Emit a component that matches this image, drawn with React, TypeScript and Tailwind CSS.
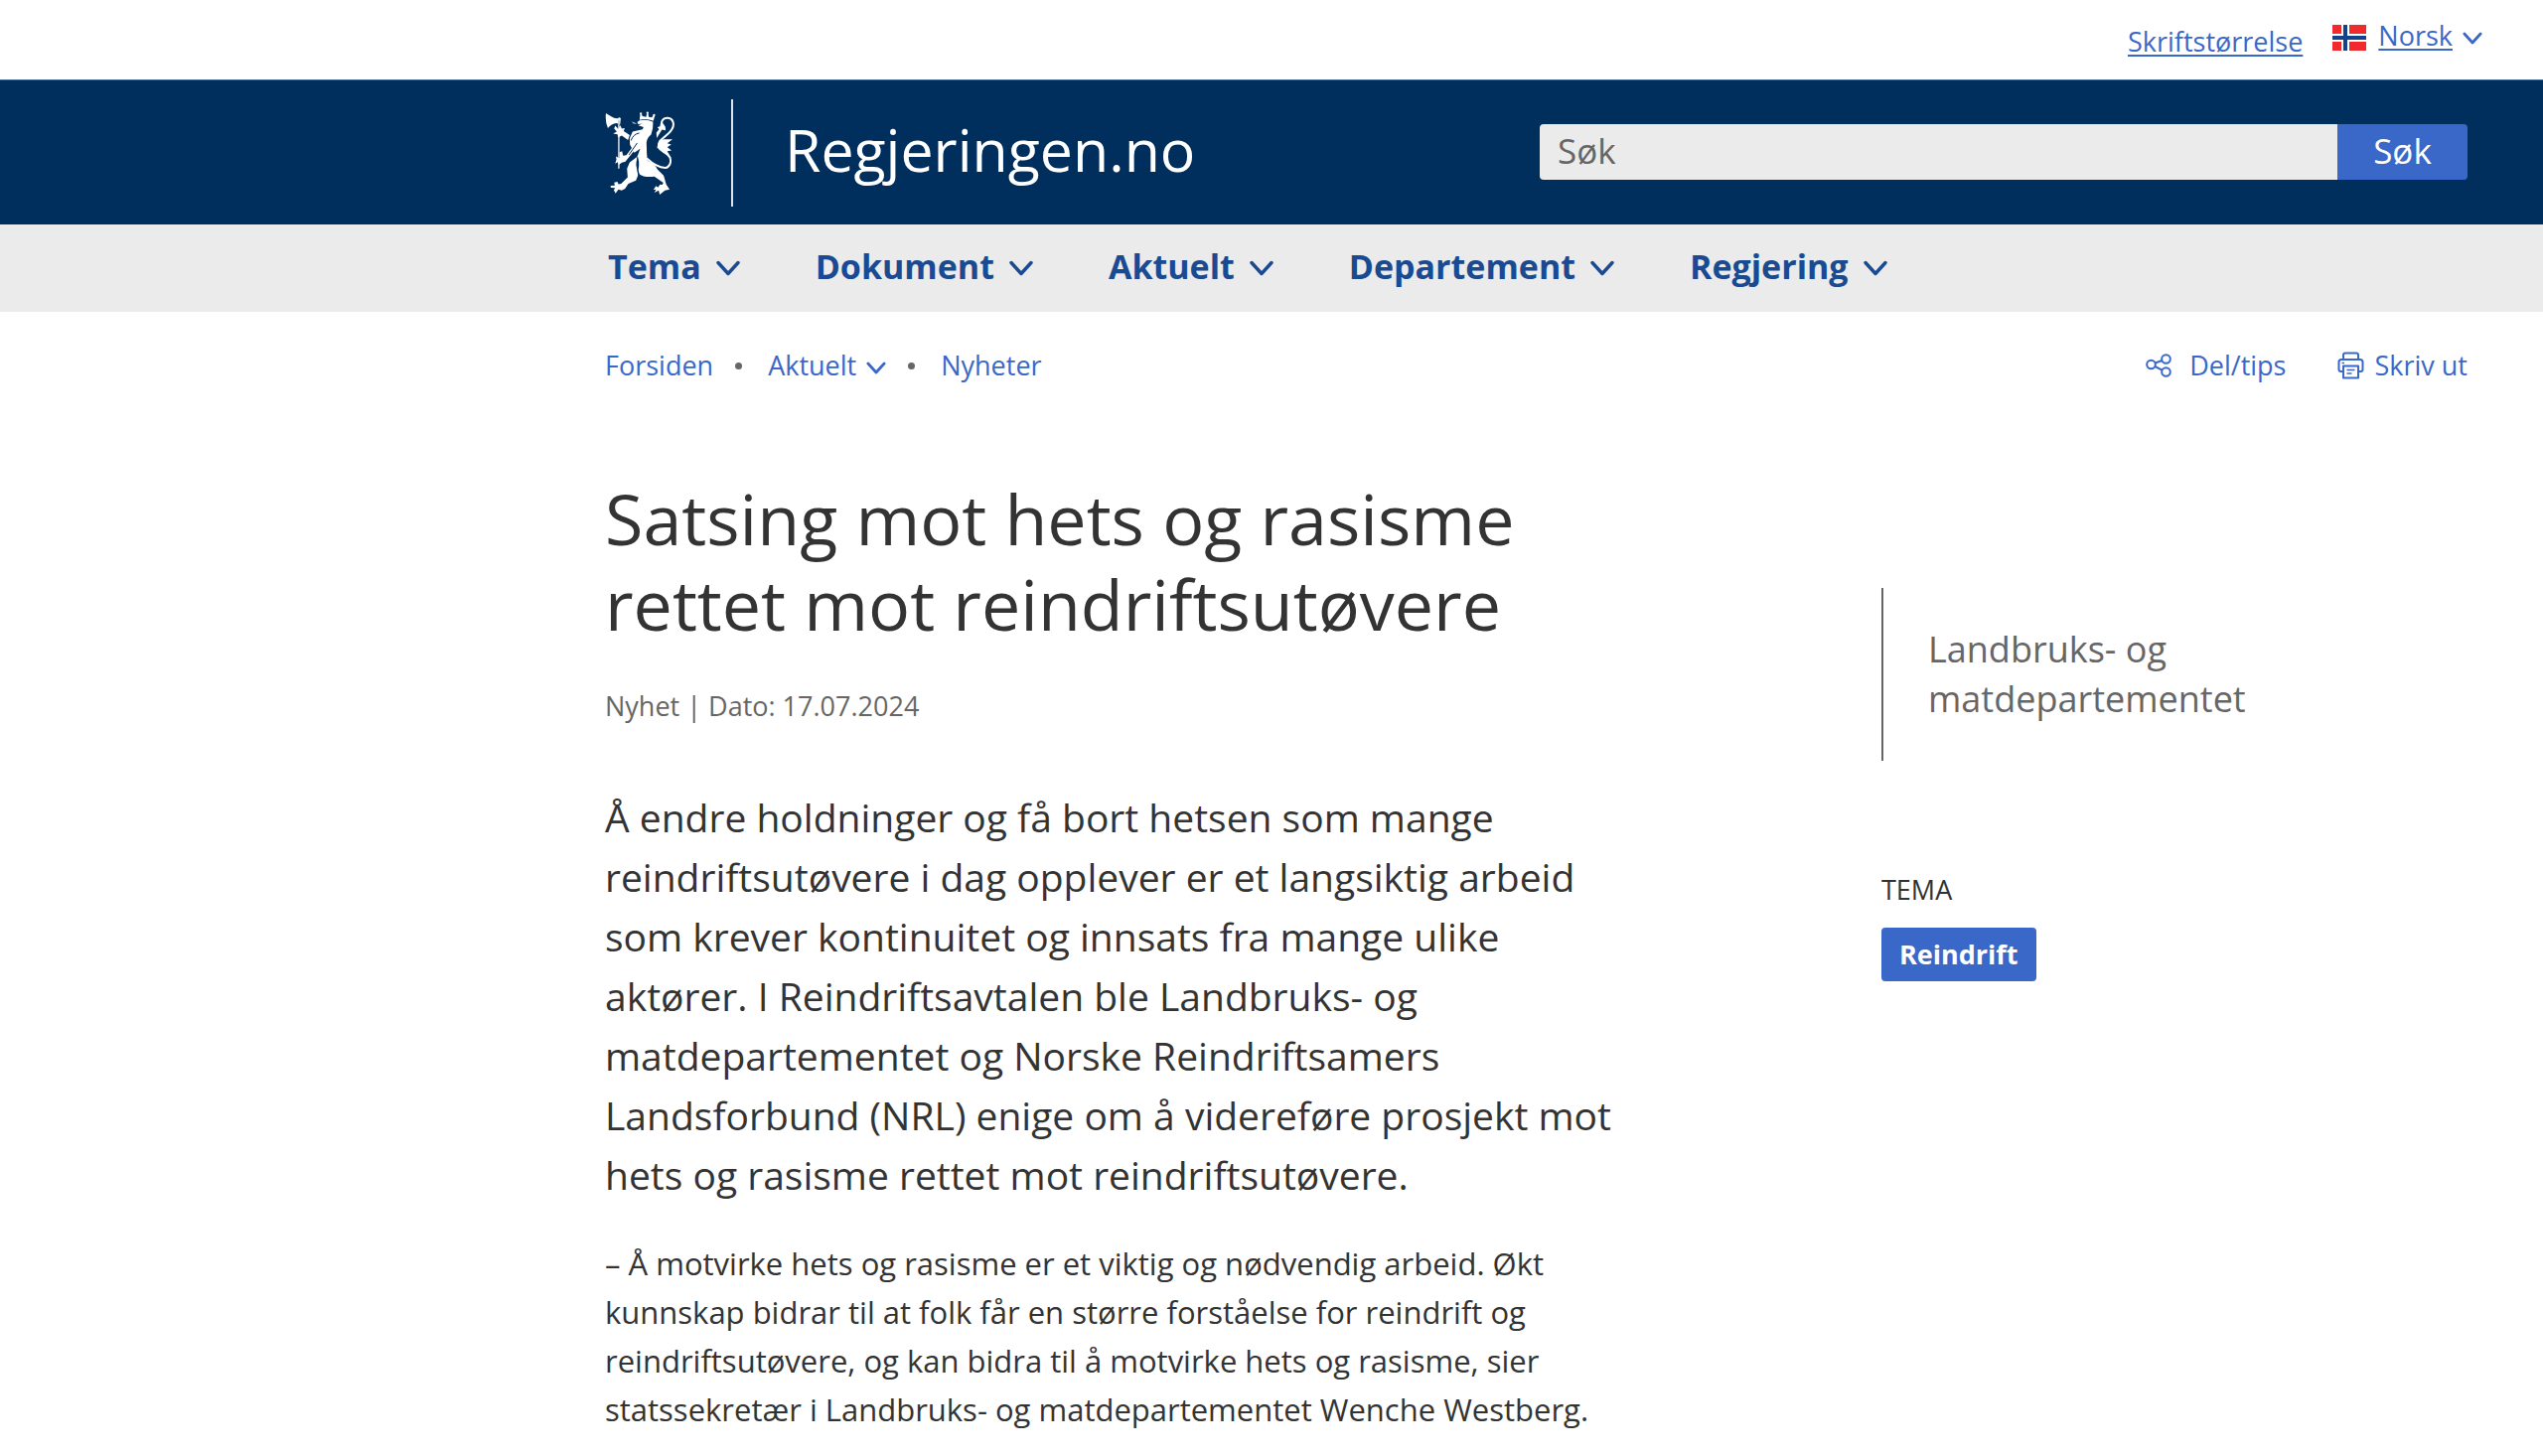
import React from 'react';

const menuItems = ['Tema', 'Dokument', 'Aktuelt', 'Departement', 'Regjering'];

interface ChevronProps {
  className: string;
}

const Chevron: React.FC<ChevronProps> = ({ className }) => (
  <svg viewBox="0 0 24 16" className={className} fill="none" stroke="currentColor" strokeWidth="3.4" strokeLinecap="round" strokeLinejoin="round" aria-hidden="true">
    <path d="M2 2.5 12 13.5 22 2.5" />
  </svg>
);

// Norwegian flag
const Flag = () => (
  <svg viewBox="0 0 34 26" className="mt-1 h-[26px] w-[34px]" aria-hidden="true">
    <rect width="34" height="26" fill="#ef2b2d" />
    <path d="M0 13H34M13 0V26" stroke="#fff" strokeWidth="8" />
    <path d="M0 13H34M13 0V26" stroke="#14438c" strokeWidth="4" />
  </svg>
);

// The lion from the coat of arms, holding the axe
const Lion = () => (
  <svg viewBox="58 66 212 256" className="mt-0.5 h-[85px] w-[71px]" fill="#fff" aria-hidden="true">
    <path d="M60 72 76 82Q86 89 96 88 101 82 105 88L103 106 92 102Q77 104 66 117 57 96 60 72Z" />
    <path d="M99 92V240" stroke="#c3cedb" strokeWidth="5" />
    {/* front paws and arms */}
    <path d="M88 110 98 120 103 108 108 119 117 117 114 126 132 138 127 153 108 140 97 146 95 136 82 134 93 128 85 119Z" />
    <path d="M153 158 163 164 119 219 108 222 99 229 96 220 88 225 92 212 90 203 101 208 101 190 109 187 112 201 122 199Z" />
    {/* crown, head and torso */}
    <circle cx="166" cy="73" r="3.5" />
    <circle cx="186" cy="71" r="3.5" />
    <circle cx="206" cy="78" r="3.5" />
    <path d="M164 75 168 74 171 81 182 83 184 73 188 73 190 83 199 85 204 78 208 80 204 95Q184 87 162 92Z" />
    <path d="M162 94Q184 89 203 98L202 118 197 137Q184 148 183 161L184 194 186 216Q211 228 216 242L235 261 243 288 253 303 239 306 223 319 220 306 207 313 212 303 204 304 212 293 218 297 224 288 231 289 234 283 207 264Q174 267 162 257L158 245Q164 217 155 204L164 180 146 192 133 168 132 148 141 128 171 121 174 114 158 109 170 104 158 105 155 99Z" />
    <path d="M138 97 148 101 154 105 143 104Z" opacity=".65" />
    {/* hind leg */}
    <path d="M156 203Q151 219 154 233L157 261 151 276 128 286 118 301 108 306 98 303 89 315 84 305 88 299 75 298 74 292 87 291 85 282 95 280 98 287 106 286 126 266 124 240 132 221Z" />
    <path d="M136 155Q142 136 161 132M155 162 130 198M156 205Q149 230 158 253" fill="none" stroke="#002e5d" strokeWidth="3" />
    {/* tail */}
    <path d="M184 209Q213 236 240 238C252 236 260 222 254 206Q247 193 234 187C216 180 216 162 230 150L250 133C262 122 267 108 263 97C258 84 238 83 231 94Q226 101 234 110" fill="none" stroke="#fff" strokeWidth="6" />
    <path d="M226 99 234 105 240 113 241 124 230 122 214 147 213 131 221 121 216 114 224 112Z" />
    <path d="M221 155 236 151 262 151 246 163 258 167 246 175 259 185 246 187 258 208 233 192 215 176Z" />
  </svg>
);

const ShareIcon = () => (
  <svg viewBox="0 0 26 24" className="h-6 w-[26px]" fill="none" stroke="currentColor" strokeWidth="2" aria-hidden="true">
    <circle cx="5.5" cy="11" r="4.3" />
    <circle cx="20.5" cy="5.5" r="4.3" />
    <circle cx="20.5" cy="18.5" r="4.3" />
    <path d="M9.6 9.5 16.4 7M9.4 13 16.6 16.6" />
  </svg>
);

const PrinterIcon = () => (
  <svg viewBox="0 0 27 28" className="h-7 w-[27px]" fill="none" stroke="currentColor" strokeWidth="2" strokeLinejoin="round" aria-hidden="true">
    <path d="M6 8V3.5Q6 1.5 8 1.5H19Q21 1.5 21 3.5V8" />
    <path d="M6 20H3.5Q1.5 20 1.5 18V10.5Q1.5 8 4 8H23Q25.5 8 25.5 10.5V18Q25.5 20 23.5 20H21" />
    <path d="M6 14.5H21V26.5H6Z" />
    <path d="M9.5 18.5H17.5M9.5 22H14.5M4.5 11.5H7" strokeWidth="1.5" />
  </svg>
);

const TopBar = () => (
  <div className="flex h-20 items-center justify-end gap-[30px] pt-1 pr-[61px] text-[27px] leading-10 text-[#3a68c8]">
    <a href="#skrift" className="underline decoration-2 underline-offset-[3px]">Skriftstørrelse</a>
    <div className="flex items-center gap-3 pb-3">
      <Flag />
      <button type="button" className="flex items-center gap-[10px]">
        <span className="underline decoration-2 underline-offset-[3px]">Norsk</span>
        <Chevron className="mt-1 h-[13px] w-5" />
      </button>
    </div>
  </div>
);

const Header = () => (
  <header className="flex h-[146px] items-center justify-between border-t border-[#3b6a95] bg-[#002e5d] pr-[76px] pl-[609px] text-white">
    <a href="#forsiden" className="flex items-center">
      <Lion />
      <span className="ml-14 h-[108px] w-0.5 bg-[#dfe5ec]" />
      <span className="ml-[52px] pb-2 text-[59px] leading-20">Regjeringen.no</span>
    </a>
    <form className="mb-0.5 flex h-14 w-[934px] text-[35px]" onSubmit={(e) => e.preventDefault()}>
      <input type="search" aria-label="Søk" placeholder="Søk" className="min-w-0 flex-1 rounded-l-sm bg-[#ebebeb] px-[18px] text-[#333] placeholder:text-[#666]" />
      <button type="submit" className="w-[131px] rounded-r-sm bg-[#3a68c8]">Søk</button>
    </form>
  </header>
);

const Menu = () => (
  <nav className="flex h-[88px] items-center gap-[76px] bg-[#ebebeb] pb-1 pl-[612px] text-[34px] font-bold text-[#194a92]">
    {menuItems.map((item) => (
      <button key={item} type="button" className="flex items-center gap-[15px]">
        {item}
        <Chevron className="mt-1 h-4 w-6" />
      </button>
    ))}
  </nav>
);

const Breadcrumbs = () => (
  <div className="flex items-center justify-between pt-[34px] text-[27px] leading-10 text-[#3a68c8]">
    <nav className="flex items-center">
      <a href="#forsiden">Forsiden</a>
      <span className="mr-[26px] ml-[22px] size-[7px] rounded-full bg-[#666]" />
      <button type="button" className="flex items-center gap-[10px]">
        Aktuelt
        <Chevron className="mt-1 h-[13px] w-5" />
      </button>
      <span className="mr-[26px] ml-[22px] size-[7px] rounded-full bg-[#666]" />
      <a href="#nyheter">Nyheter</a>
    </nav>
    <div className="flex items-center gap-[52px]">
      <button type="button" className="flex items-center gap-[18px]">
        <ShareIcon />
        Del/tips
      </button>
      <button type="button" className="flex items-center gap-[10px]">
        <PrinterIcon />
        Skriv ut
      </button>
    </div>
  </div>
);

const Article = () => (
  <article className="w-[1030px] text-[#333]">
    <h1 className="text-[70px] leading-[86px]">
      Satsing mot hets og rasisme rettet mot reindriftsutøvere
    </h1>
    <p className="mt-10 text-[27px] leading-10 text-[#666]">Nyhet | Dato: 17.07.2024</p>
    <p className="mt-[62px] text-[39px] leading-[60px]">
      Å endre holdninger og få bort hetsen som mange reindriftsutøvere i dag opplever er et
      langsiktig arbeid som krever kontinuitet og innsats fra mange ulike aktører. I
      Reindriftsavtalen ble Landbruks- og matdepartementet og Norske Reindriftsamers
      Landsforbund (NRL) enige om å videreføre prosjekt mot hets og rasisme rettet mot
      reindriftsutøvere.
    </p>
    <p className="mt-[35px] text-[31px] leading-[49px]">
      – Å motvirke hets og rasisme er et viktig og nødvendig arbeid. Økt kunnskap bidrar til at
      folk får en større forståelse for reindrift og reindriftsutøvere, og kan bidra til å
      motvirke hets og rasisme, sier statssekretær i Landbruks- og matdepartementet Wenche
      Westberg.
    </p>
  </article>
);

const Sidebar = () => (
  <aside className="mt-[113px] w-[590px]">
    <p className="w-[400px] border-l-2 border-[#666] py-[37px] pl-[45px] text-[36px] leading-[50px] text-[#666]">
      Landbruks- og matdepartementet
    </p>
    <h2 className="mt-[110px] text-[27px] leading-10 text-[#333]">TEMA</h2>
    <a href="#reindrift" className="mt-[18px] inline-block rounded-sm bg-[#3a68c8] px-[18px] py-[7px] text-[27px] leading-10 font-bold text-white">
      Reindrift
    </a>
  </aside>
);

export default function App() {
  return (
    <div className="min-h-screen bg-white font-['Open_Sans',sans-serif]">
      <TopBar />
      <Header />
      <Menu />
      <main className="pr-[76px] pl-[609px]">
        <Breadcrumbs />
        <div className="flex justify-between pt-[91px]">
          <Article />
          <Sidebar />
        </div>
      </main>
    </div>
  );
}
